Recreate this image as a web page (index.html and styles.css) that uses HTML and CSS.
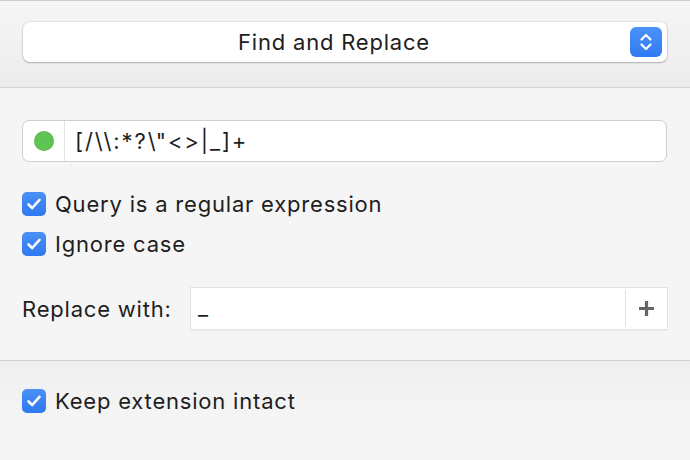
FILE: index.html
```html
<!DOCTYPE html>
<html lang="en">
<head>
  <meta charset="UTF-8">
  <title>Find and Replace</title>
  <link rel="stylesheet" href="styles.css">
</head>
<body>

  <div class="header">
    <div class="popup">
      <span class="popup-label">Find and Replace</span>
      <span class="stepper">
        <svg width="14" height="20" viewBox="0 0 14 20">
          <path d="M2.5 7.5 L7 3 L11.5 7.5 M2.5 12.5 L7 17 L11.5 12.5" fill="none" stroke="#fff" stroke-width="2.2" stroke-linecap="round" stroke-linejoin="round"/>
        </svg>
      </span>
    </div>
  </div>

  <div class="options">
    <div class="query">
      <span class="status"><span class="dot"></span></span>
      <span class="query-text">[/\\:*?\"&lt;&gt;|_]+</span>
    </div>

    <label class="check first">
      <span class="box"><svg width="16" height="14" viewBox="0 0 16 14"><path d="M2.5 7.5 L6.2 11 L13.5 2.8" fill="none" stroke="#fff" stroke-width="2.6" stroke-linecap="round" stroke-linejoin="round"/></svg></span>
      Query is a regular expression
    </label>
    <label class="check">
      <span class="box"><svg width="16" height="14" viewBox="0 0 16 14"><path d="M2.5 7.5 L6.2 11 L13.5 2.8" fill="none" stroke="#fff" stroke-width="2.6" stroke-linecap="round" stroke-linejoin="round"/></svg></span>
      Ignore case
    </label>

    <div class="replace">
      <span class="replace-label">Replace with:</span>
      <div class="replace-field">
        <span class="replace-text">_</span>
        <span class="add">
          <svg width="17" height="17" viewBox="0 0 17 17"><path d="M8.5 1 V16 M1 8.5 H16" stroke="#666" stroke-width="3.2"/></svg>
        </span>
      </div>
    </div>
  </div>

  <div class="footer">
    <label class="check">
      <span class="box"><svg width="16" height="14" viewBox="0 0 16 14"><path d="M2.5 7.5 L6.2 11 L13.5 2.8" fill="none" stroke="#fff" stroke-width="2.6" stroke-linecap="round" stroke-linejoin="round"/></svg></span>
      Keep extension intact
    </label>
  </div>

</body>
</html>
```

FILE: styles.css
```css
body {
  font-family: 'Inter', 'Helvetica Neue', sans-serif;
  font-size: 22px;
  letter-spacing: 0.8px;
  color: #1e1e1e;
  background-color: #f5f5f5;
  margin: 0;
  padding: 0;
  width: 690px;
  height: 460px;
  overflow: hidden;
}

/* top section with the action popup */
.header {
  border-top: 1px solid #cdcdcd;
  border-bottom: 1px solid #d3d3d3;
  background: linear-gradient(#f6f6f6, #ececec);
  padding: 21px 23px 0 23px;
  height: 65px;
}

.popup {
  display: flex;
  align-items: center;
  height: 40px;
  width: 644px;
  box-sizing: border-box;
  background-color: #fff;
  border-radius: 7px;
  box-shadow: 0 0 0 1px rgba(0, 0, 0, 0.06), 0 1px 2px rgba(0, 0, 0, 0.22);
  padding: 0 5px 0 0;
}

.popup-label {
  flex: 1;
  text-align: center;
  padding-left: 15px;
}

.stepper {
  display: flex;
  align-items: center;
  justify-content: center;
  width: 32px;
  height: 30px;
  border-radius: 6px;
  background: linear-gradient(#4b92f7, #2f7af2);
}

/* middle section */
.options {
  padding: 32px 23px 31px 22px;
  border-bottom: 1px solid #d3d3d3;
}

.query {
  display: flex;
  align-items: center;
  height: 42px;
  box-sizing: border-box;
  width: 645px;
  background-color: #fff;
  border: 1px solid #cfcfcf;
  border-radius: 7px;
}

.status {
  display: flex;
  align-items: center;
  justify-content: center;
  width: 41px;
  height: 100%;
  border-right: 1px solid #e3e3e3;
}

.dot {
  width: 20px;
  height: 20px;
  border-radius: 50%;
  background-color: #5fc453;
  box-shadow: inset 0 0 0 1px rgba(0, 0, 0, 0.06);
}

.query-text {
  padding-left: 10px;
  letter-spacing: 1.9px;
}

.check {
  display: flex;
  align-items: center;
  height: 24px;
  gap: 9px;
  margin-top: 16px;
}

.check.first {
  margin-top: 30px;
}

.box {
  display: flex;
  align-items: center;
  justify-content: center;
  width: 24px;
  height: 24px;
  border-radius: 5px;
  background: linear-gradient(#4a91f7, #2f78f0);
}

.replace {
  display: flex;
  align-items: center;
  margin-top: 32px;
}

.replace-label {
  width: 169px;
}

.replace-field {
  display: flex;
  align-items: stretch;
  width: 476px;
  height: 41px;
  background-color: #fff;
  box-shadow: 0 0 0 1px #e2e2e2, 0 1px 1px rgba(0, 0, 0, 0.18);
}

.replace-text {
  flex: 1;
  padding: 4px 0 0 7px;
  border-right: 1px solid #e0e0e0;
  margin: 2px 0;
}

.add {
  display: flex;
  align-items: center;
  justify-content: center;
  width: 41px;
}

/* bottom section */
.footer {
  padding: 28px 22px 0 22px;
  background: linear-gradient(#efefef, #f5f5f5 60%);
  height: 98px;
  box-sizing: border-box;
}

.footer .check {
  margin-top: 0;
}
```
